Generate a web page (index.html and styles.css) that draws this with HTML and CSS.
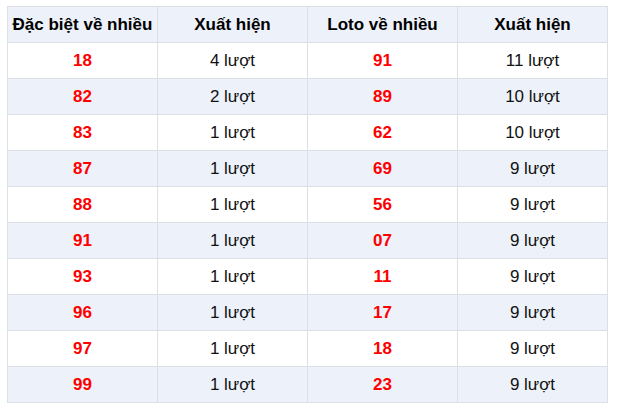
FILE: index.html
```html
<!DOCTYPE html>
<html>
<head>
<meta charset="utf-8">
<link rel="stylesheet" href="styles.css">
</head>
<body>
<table class="stats">
<thead>
<tr><th>Đặc biệt về nhiều</th><th>Xuất hiện</th><th>Loto về nhiều</th><th>Xuất hiện</th></tr>
</thead>
<tbody>
<tr><td class="num">18</td><td>4 lượt</td><td class="num">91</td><td>11 lượt</td></tr>
<tr><td class="num">82</td><td>2 lượt</td><td class="num">89</td><td>10 lượt</td></tr>
<tr><td class="num">83</td><td>1 lượt</td><td class="num">62</td><td>10 lượt</td></tr>
<tr><td class="num">87</td><td>1 lượt</td><td class="num">69</td><td>9 lượt</td></tr>
<tr><td class="num">88</td><td>1 lượt</td><td class="num">56</td><td>9 lượt</td></tr>
<tr><td class="num">91</td><td>1 lượt</td><td class="num">07</td><td>9 lượt</td></tr>
<tr><td class="num">93</td><td>1 lượt</td><td class="num">11</td><td>9 lượt</td></tr>
<tr><td class="num">96</td><td>1 lượt</td><td class="num">17</td><td>9 lượt</td></tr>
<tr><td class="num">97</td><td>1 lượt</td><td class="num">18</td><td>9 lượt</td></tr>
<tr><td class="num">99</td><td>1 lượt</td><td class="num">23</td><td>9 lượt</td></tr>
</tbody>
</table>
</body>
</html>
```
FILE: styles.css
```css
html, body {
  margin: 0;
  padding: 0;
  background: #fff;
}
body {
  padding: 6px 0 0 7px;
  font-family: "Liberation Sans", Arial, sans-serif;
  font-size: 17px;
  color: #111;
}
.stats {
  border-collapse: collapse;
  table-layout: fixed;
  width: 601px;
}
.stats th, .stats td {
  border: 1px solid #dcdfe5;
  width: 150px;
  height: 36px;
  padding: 0;
  text-align: center;
  vertical-align: middle;
  box-sizing: border-box;
  white-space: nowrap;
}
.stats thead th {
  background: #edf1f9;
  font-weight: bold;
  font-size: 17px;
  color: #000;
}
.stats tbody tr:nth-child(even) td {
  background: #edf1f9;
}
.stats td.num {
  color: #ff0000;
  font-weight: bold;
  font-size: 17px;
}
```
